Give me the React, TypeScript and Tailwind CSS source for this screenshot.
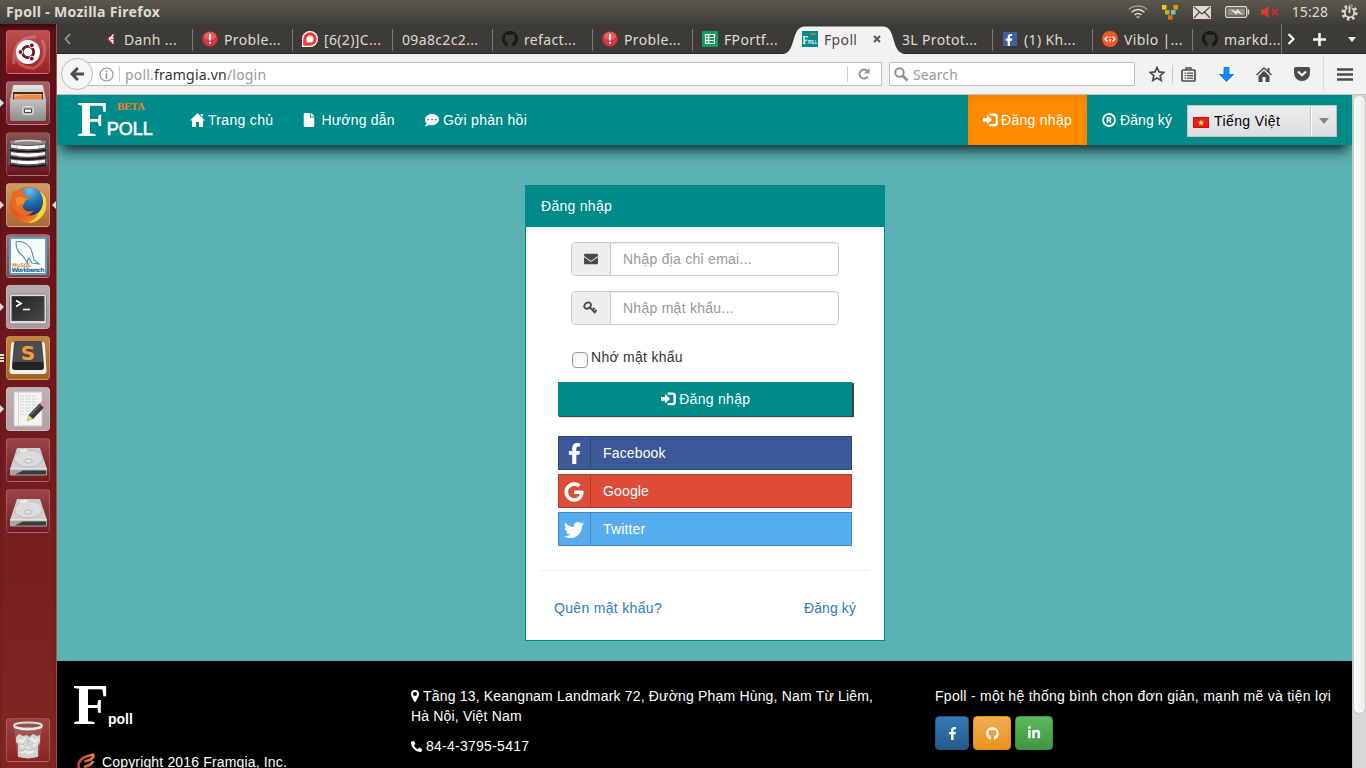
import React from "react";
import {
  FaCommentDots,
  FaEnvelope,
  FaFacebookF,
  FaFile,
  FaGithub,
  FaGoogle,
  FaLinkedinIn,
  FaPhoneAlt,
  FaTwitter,
} from "react-icons/fa";

const UI = "font-['Noto_Sans',sans-serif]";

/* ---------- small glyphs ---------- */

function LoginGlyph() {
  return (
    <svg width="15" height="14" viewBox="0 0 15 14" className="shrink-0">
      <path d="M0 5h4V2l5.200 4.800L4 11.500V8.800H0z" fill="#fff" />
      <path d="M6.500 1.600h5a2.200 2.200 0 0 1 2.200 2v6.500a2.200 2.200 0 0 1-2.200 2h-5" fill="none" stroke="#fff" strokeWidth="2.400" />
    </svg>
  );
}

function HomeGlyph() {
  return (
    <svg width="15" height="14" viewBox="0 0 15 14" className="shrink-0">
      <path d="M7.500 0 15 7.600h-2V14H9V9H6v5H2V7.600H0zM10.700 1h2v3l-2-2z" fill="#fff" />
    </svg>
  );
}

function RegisteredGlyph() {
  return (
    <svg width="14" height="14" viewBox="0 0 14 14" className="shrink-0">
      <circle cx="7" cy="7" r="6" fill="none" stroke="#fff" strokeWidth="1.800" />
      <path d="M5.400 9.700V4.700h2a1.300 1.300 0 0 1 0 2.600H5.400M7.300 7.300l1.600 2.400" fill="none" stroke="#fff" strokeWidth="1.500" />
    </svg>
  );
}

function KeyGlyph() {
  return (
    <svg width="15" height="14" viewBox="0 0 15 14">
      <g fill="none" stroke="#4a4a4a">
        <ellipse cx="4.600" cy="4.600" rx="3.600" ry="2.800" strokeWidth="1.900" transform="rotate(-35 4.600 4.600)" />
        <path d="m6.800 6.400 5.700 5.800M9.400 9l2.200-2M11.400 11l2.200-2" strokeWidth="1.900" />
      </g>
    </svg>
  );
}

function PinGlyph() {
  return (
    <svg width="8" height="12" viewBox="0 0 8 12" className="mr-1 inline align-[-1px]">
      <path fillRule="evenodd" d="M4 0a4 4 0 0 1 4 4c0 1.500-.5 2.200-3 7.300q-1 1.400-2 0C.5 6.200 0 5.500 0 4a4 4 0 0 1 4-4zm0 2a2 2 0 1 0 0 4 2 2 0 0 0 0-4z" fill="#fff" />
    </svg>
  );
}

function Octocat() {
  return (
    <svg width="16" height="16" viewBox="0 0 16 16">
      <path
        d="M5.600 15.600A8 8 0 1 1 10.400 15.600v-2.700c0-.7-.2-1.200-.5-1.500 2.100-.3 3.300-1.500 3.300-4 0-.9-.3-1.700-.8-2.300.1-.5.100-1.200-.2-2-.8 0-1.600.5-2.100.9a8 8 0 0 0-4.100 0c-.6-.4-1.400-.9-2.200-.9-.3.800-.3 1.500-.2 2-.5.600-.8 1.400-.8 2.300 0 2.500 1.200 3.700 3.300 4-.3.300-.4.600-.5 1.300-1 .3-1.900 0-2.500-1-.3-.5-.7-.8-1.200-.8.900.6 1 1.300 1.400 1.900.5.700 1.300.8 2.300.6z"
        fill="#181818"
      />
    </svg>
  );
}

/* ---------- desktop top panel ---------- */

function TopPanel() {
  return (
    <header className={`${UI} flex h-6 shrink-0 items-center justify-between bg-gradient-to-b from-[#5b594e] to-[#3f3e39] pr-2 pl-1.5`}>
      <span className="text-sm font-bold tracking-[0.32px] text-[#dfdbd2]">Fpoll - Mozilla Firefox</span>
      <div className="flex items-center">
        <svg width="20" height="14" viewBox="0 0 20 14" fill="none" stroke="#dfdbd2" strokeWidth="1.500">
          <path d="M.8 4.500C6-.2 14-.2 19.200 4.500" opacity=".55" />
          <path d="M3.500 7.200c4-3.400 9-3.400 13 0M6.500 9.900c2.200-1.800 4.800-1.800 7 0" />
          <path d="m8 11.500 2 2 2-2z" fill="#dfdbd2" stroke="none" />
        </svg>
        <svg width="16" height="15" viewBox="0 0 16 15" className="ml-[14px]">
          <path d="M0 0h4.500v4.500H0z" fill="#f7c51e" />
          <path d="M11.500 0H16v4.500h-4.500z" fill="#d4a500" />
          <path d="M3 5h4.500v4.500H3z" fill="#a4c400" />
          <path d="M9 5h4.500v4.500H9z" fill="#79bfe0" />
          <path d="M6 10.200h4.500v4.500H6z" fill="#f56b09" />
        </svg>
        <svg width="18" height="13" viewBox="0 0 18 13" className="ml-[15px]">
          <path d="M0 0h18v13H0z" fill="#dfdbd2" />
          <path d="m1 1 8 7 8-7M1 12l5.500-6M17 12l-5.500-6" fill="none" stroke="#4b4a43" strokeWidth="1.200" />
        </svg>
        <svg width="25" height="12" viewBox="0 0 25 12" className="ml-[14px]">
          <rect x=".7" y=".7" width="21" height="10.600" rx="1.500" fill="none" stroke="#dfdbd2" strokeWidth="1.300" />
          <path d="M2.500 2.500h17.500v7H2.500z" fill="#8f8d85" />
          <path d="M22.800 3.500h1.400v5h-1.400z" fill="#dfdbd2" />
          <path d="m5 3 6.500 2.500L12 3l6 5.800-6-2.300-.5 2.300z" fill="#efece4" />
        </svg>
        <svg width="18" height="14" viewBox="0 0 18 14" className="ml-[11px]">
          <path d="M0 4.500h3L7.500 1v12L3 9.500H0z" fill="#df382c" />
          <path d="m11 4.500 6 5.500M17 4.500 11 10" stroke="#c4302a" strokeWidth="2" />
        </svg>
        <span className="ml-[13px] text-sm tracking-[0.1px] text-[#dfdbd2]">15:28</span>
        <svg width="17" height="17" viewBox="0 0 17 17" className="ml-[13px]">
          <circle cx="8.500" cy="8.500" r="6.800" fill="none" stroke="#dfdbd2" strokeWidth="2.600" strokeDasharray="2.670 2.670" />
          <circle cx="8.500" cy="8.500" r="4.800" fill="none" stroke="#dfdbd2" strokeWidth="1.800" />
          <path d="M8.500 1v8" stroke="#45443e" strokeWidth="4" />
          <path d="M8.500 1.500V9" stroke="#dfdbd2" strokeWidth="1.900" />
        </svg>
      </div>
    </header>
  );
}

/* ---------- launcher ---------- */

function UbuntuArt() {
  return (
    <>
      <path d="M8 34C6 16 16 6 30 7M36 10c6 12 2 24-10 29M12 14C6 26 12 38 26 38" fill="none" stroke="#fff" strokeOpacity=".22" strokeWidth="3" />
      <circle cx="22" cy="22" r="12" fill="#fff" />
      <circle cx="22" cy="22" r="5.700" fill="none" stroke="#6b1a20" strokeWidth="2.800" />
      <g fill="#6b1a20" stroke="#fff" strokeWidth="1">
        <circle cx="14.500" cy="22" r="2.400" />
        <circle cx="25.800" cy="15.400" r="2.400" />
        <circle cx="25.800" cy="28.600" r="2.400" />
      </g>
    </>
  );
}

function FilesArt() {
  return (
    <>
      <path d="M7 5q0-1 1-1h28q1 0 1 1l3 14v19q0 2-2 2H6q-2 0-2-2V19z" fill="url(#steelTop)" />
      <path d="M7 11h30v8H7z" fill="#4b2a1b" />
      <path d="M8 13h28v6H8z" fill="#f3b06e" />
      <path d="m8 16 10-2h18v5H8z" fill="#e8884a" />
      <path d="M6 18.500h32v20H6z" fill="url(#steel)" />
      <rect x="16.500" y="25.500" width="11" height="8" rx="2" fill="#b9b9b7" stroke="#dedede" />
      <path d="M18.500 28h7v3.500h-7z" fill="#f5f5f5" stroke="#444" />
    </>
  );
}

function DatabaseBand({ y }: { y: number }) {
  return (
    <g transform={`translate(0 ${y})`}>
      <path d="M2 0q20 4 40 0v6.500q-20 4-40 0z" fill="#555" />
      <path d="M5 1.500q17 3 34 0v3q-17 3-34 0z" fill="#ededed" />
      <path d="M12 2.400q10 1.500 20 0v3q-10 1.500-20 0z" fill="#fff" />
      <path d="M4 7q18 3.500 36 0" fill="none" stroke="#111" strokeWidth="1.500" />
    </g>
  );
}

function DatabaseArt() {
  return (
    <>
      <path d="M4 9q18-3 36 0v3q-18 3-36 0z" fill="#8a8a8a" />
      <path d="M9 9.500q13-2 26 0" fill="none" stroke="#ddd" strokeWidth="1.500" />
      <DatabaseBand y={11} />
      <DatabaseBand y={18.500} />
      <DatabaseBand y={26} />
    </>
  );
}

function FirefoxArt() {
  return (
    <>
      <circle cx="22" cy="22" r="18" fill="url(#fox)" />
      <path d="M34 8.500C40 13 41.500 20 39.500 27 36 36 29 40 22 40c8-4 12-9 12-16z" fill="#fbd23a" />
      <circle cx="23.500" cy="18.500" r="14" fill="url(#globe)" />
      <path d="M8 6.500 10 11c2-3 4-4 6-5 0 3 1 5 2.500 6.500 2 0 4 0 5 1 0 2-2 3-4 4-1 1-1 2-1 3-2 1-2 3-1 5 2 3 6 4 10 2-2 4-7 6-12 4C9 29 5 23 5 17c0-4 1-8 3-10.500z" fill="#ea6a1e" />
      <path d="M34 9c3 5 4 10 2 15-1 5-5 8-9 9 9-1 14-8 13-15 0-4-2-7-6-9z" fill="#fbd23a" />
      <path d="M11 14c3-1 6 0 7 2 2 0 3-1 4-1 0 1-1 2-3 3-1 1-1 2-1 3-3 0-5 1-6 3-2-3-3-7-1-10z" fill="#f08a3c" />
    </>
  );
}

function WorkbenchArt() {
  return (
    <>
      <rect x="4" y="4" width="36" height="36" rx="1" fill="#f7fbfd" stroke="#5b9fc4" strokeWidth="2" />
      <path d="M10 8c7-2 14 3 16 10l2 8 5 4-7-1-3-5c-2 2-2 4-1 6l-5-8C11 19 10 14 10 8z" fill="#fdfeff" stroke="#4a8fb0" strokeWidth="1.100" />
      <text x="6" y="32.500" fontSize="5" fontWeight="bold" fill="#e08a1e" fontFamily="DejaVu Sans">MySQL</text>
      <text x="5.500" y="38" textLength="33" fontSize="6" fontWeight="bold" fill="#20678f" fontFamily="DejaVu Sans">Workbench</text>
    </>
  );
}

function TerminalArt() {
  return (
    <>
      <rect x="3.500" y="9" width="37" height="30" rx="2" fill="#dedcd8" stroke="#8a8888" />
      <rect x="6" y="11.500" width="32" height="24" fill="url(#screen)" stroke="#444" />
      <path d="m10 15.500 5 3-5 3" fill="none" stroke="#fff" strokeWidth="1.800" />
      <path d="M17 24.500h7" stroke="#fff" strokeWidth="1.500" />
    </>
  );
}

function SublimeArt() {
  return (
    <>
      <path d="M5 9q0-3 3-3h28q3 0 3 3l1.500 26q0 3-3 3h-31q-3 0-3-3z" fill="#efefef" />
      <path d="M8 7q0-2 2-2h24q2 0 2 2l2 22H6z" fill="#4c4c4c" />
      <path d="m6 31 1-5h30l1 5q0 3-3 3H9q-3 0-3-3z" fill="#242424" />
      <text x="22" y="24" textAnchor="middle" fontSize="20" fontWeight="bold" fill="#f89a35" fontFamily="DejaVu Sans">S</text>
    </>
  );
}

function EditorArt() {
  return (
    <>
      <path d="M8 5h28v34H8z" fill="#f4f4f2" stroke="#c5c5c5" strokeWidth=".8" />
      <path d="M12.500 5v34" stroke="#f3c4c4" />
      <path d="M14 9h16M14 12h19M14 15h17M14 18h18M14 21h14M14 24h12M14 27h6" stroke="#cfd2d7" strokeWidth="1" strokeDasharray="4 1 6 1" />
      <path d="m21 34 1.500-6L34 16l4.500 4L27 32z" fill="#3c3c3c" />
      <path d="m21 34 1.500-6 4.500 4z" fill="#e5d77a" />
      <path d="m33.500 16.500 2-2q2-1 4 1t.5 4L38 21z" fill="#e08dc0" />
      <path d="m24 28.500 10-10" stroke="#8a8a8a" />
    </>
  );
}

function DriveArt() {
  return (
    <>
      <path d="M11 10h23l7 21v6H4v-6z" fill="#cfcfcf" />
      <path d="M4 31h37v5q0 1.500-1.500 1.500h-34Q4 37.500 4 36z" fill="#a5a5a5" />
      <path d="M17 32.500h23v4H9z" fill="#3b3b3b" />
      <path d="M4 31h37" stroke="#f4f4f4" />
      <ellipse cx="22.500" cy="20.500" rx="14" ry="8.500" fill="#dcdcdc" stroke="#bcbcbc" />
      <ellipse cx="22.500" cy="23" rx="3.500" ry="2" fill="#e8e8e8" stroke="#b5b5b5" />
      <path d="m14 13 7-1" stroke="#efefef" strokeWidth="2" />
    </>
  );
}

function TrashArt() {
  return (
    <>
      <path d="M8 10h28l-3 28q-11 4-22 0z" fill="#fff" fillOpacity=".14" />
      <path d="m10 19 3-3 4 2 4-1 2 2 4-3 4 2 3-1v7l-2 4v10q-10 4-20 0V26l-2-2z" fill="#d3d3d1" />
      <path d="m12 22 4 2 3-4M25 20l4 4 3-3M15 29l4-2 4 3M27 28l3-2M15 35l4-2 4 2 5-2" fill="none" stroke="#ececeb" strokeWidth="2.200" />
      <path d="m16 26 4 2 3-2M14 32l3 1 3-2M25 32l5-2M22 21v4" fill="none" stroke="#b9b9b7" />
      <path d="M12 38.500q10 3 20 0" fill="none" stroke="#d5d5d3" />
      <ellipse cx="22" cy="7.500" rx="14" ry="3" fill="#8d5250" stroke="#d8d8d6" strokeWidth="2" />
      <path d="M8 9q14 5 28 0" fill="none" stroke="#e8e8e8" strokeWidth="2" />
    </>
  );
}

type Item = { id: string; art: React.ReactNode; tile: string; left?: "one" | "three"; right?: boolean };

const launcher: Item[] = [
  { id: "dash", art: <UbuntuArt />, tile: "from-[#bd5050] to-[#a01c20]" },
  { id: "files", art: <FilesArt />, tile: "from-[#a86469] to-[#7f2a35]", left: "one" },
  { id: "db", art: <DatabaseArt />, tile: "from-[#8d5053] to-[#65161c]" },
  { id: "firefox", art: <FirefoxArt />, tile: "from-[#d29a62] to-[#a96a38]", left: "one", right: true },
  { id: "workbench", art: <WorkbenchArt />, tile: "from-[#a06c70] to-[#80424a]" },
  { id: "terminal", art: <TerminalArt />, tile: "from-[#b6acac] to-[#a89a9c]", left: "one" },
  { id: "sublime", art: <SublimeArt />, tile: "from-[#c4823d] to-[#a8641f]", left: "three" },
  { id: "editor", art: <EditorArt />, tile: "from-[#bfb0b2] to-[#b0a2a4]", left: "one" },
  { id: "drive1", art: <DriveArt />, tile: "from-[#9c4549] to-[#701b20]" },
  { id: "drive2", art: <DriveArt />, tile: "from-[#9c4549] to-[#701b20]" },
];

function Tile({ item }: { item: Item }) {
  return (
    <div className="relative flex h-11 w-14 shrink-0 justify-center">
      {item.left === "one" && (
        <svg width="4" height="8" viewBox="0 0 4 8" className="absolute top-[18px] left-0">
          <path d="m0 0 4 4-4 4z" fill="#ddd" />
        </svg>
      )}
      {item.left === "three" && (
        <svg width="4" height="8" viewBox="0 0 4 8" className="absolute top-[18px] left-0">
          <path d="M0 0h4v2H0zM0 3h4v2H0zM0 6h4v2H0z" fill="#ddd" />
        </svg>
      )}
      <div className={`h-11 w-11 rounded-[4px] border border-white/20 bg-gradient-to-b ${item.tile}`}>
        <svg width="44" height="44" viewBox="0 0 44 44" className="-m-px">
          {item.art}
        </svg>
      </div>
      {item.right && (
        <svg width="4" height="8" viewBox="0 0 4 8" className="absolute top-[18px] right-0">
          <path d="m4 0-4 4 4 4z" fill="#ddd" />
        </svg>
      )}
    </div>
  );
}

function Launcher() {
  return (
    <aside className="flex w-[57px] shrink-0 flex-col justify-between border-r border-[#a0504a] bg-gradient-to-b from-[#5c1118] via-[#70191c] to-[#802723] pt-1.5 pb-1.5 shadow-[inset_0_4px_4px_-2px_rgba(0,0,0,.5)]">
      <svg width="0" height="0" className="absolute">
        <defs>
          <linearGradient id="steelTop" x1="0" y1="0" x2="0" y2="1">
            <stop offset="0" stopColor="#e4e4e2" />
            <stop offset="1" stopColor="#8a8a88" />
          </linearGradient>
          <linearGradient id="steel" x1="0" y1="0" x2="0" y2="1">
            <stop offset="0" stopColor="#c2c2c0" />
            <stop offset="1" stopColor="#90908e" />
          </linearGradient>
          <linearGradient id="screen" x1="0" y1="0" x2="1" y2="1">
            <stop offset="0" stopColor="#222" />
            <stop offset="1" stopColor="#474947" />
          </linearGradient>
          <linearGradient id="fox" x1="0" y1="0" x2="1" y2="1">
            <stop offset="0" stopColor="#ea6a1c" />
            <stop offset=".5" stopColor="#e2561b" />
            <stop offset="1" stopColor="#f8a02c" />
          </linearGradient>
          <radialGradient id="globe" cx=".5" cy=".1" r=".9">
            <stop offset="0" stopColor="#6cc4ea" />
            <stop offset=".5" stopColor="#2170b4" />
            <stop offset="1" stopColor="#10386f" />
          </radialGradient>
        </defs>
      </svg>
      <div className="flex flex-col gap-[7px]">
        {launcher.map((i) => (
          <Tile key={i.id} item={i} />
        ))}
      </div>
      <Tile item={{ id: "trash", art: <TrashArt />, tile: "from-[#a0403c] to-[#8b2424]" }} />
    </aside>
  );
}

/* ---------- browser chrome ---------- */

const framgiaIcon = (
  <svg width="16" height="16" viewBox="0 0 16 16">
    <path d="M11.500 3 4 8l7.500 5z" fill="#d8261c" />
    <path d="M11.500 3.500 7.500 8l4 4.500M7 7h4.500M8 9.500h3.500" fill="none" stroke="#fff" strokeWidth="1.300" />
  </svg>
);
const alertIcon = (
  <svg width="16" height="16" viewBox="0 0 16 16">
    <circle cx="8" cy="8" r="7.600" fill="#d23a41" stroke="#b02530" strokeWidth=".8" />
    <ellipse cx="8" cy="5" rx="6" ry="4" fill="#ef7d6f" opacity=".6" />
    <path d="M7 3h2l-.3 6.500H7.300zM7.200 11h1.600v1.800H7.200z" fill="#fff" />
  </svg>
);
const chatIcon = (
  <svg width="16" height="16" viewBox="0 0 16 16">
    <path d="M0 16V8a8 8 0 1 1 8 8z" fill="#fff" />
    <path d="M1.200 14.800V8A6.800 6.800 0 1 1 8 14.800z" fill="#f03e3e" />
    <path d="M4.500 11.500V8A3.500 3.500 0 1 1 8 11.500z" fill="#fff" />
  </svg>
);
const sheetIcon = (
  <svg width="16" height="16" viewBox="0 0 16 16">
    <rect width="16" height="16" rx="1" fill="#129d58" />
    <path d="M3.500 3.500h9v9h-9zM3.500 6.500h9M3.500 9.500h9M6.500 3.500v9" fill="none" stroke="#fff" strokeWidth="1.200" />
  </svg>
);
const fbIcon = (
  <span className="ml-px flex h-[14px] w-[14px] items-end justify-end bg-[#4060a5] pr-0.5">
    <FaFacebookF size={12} color="#fff" />
  </span>
);
const vibloIcon = (
  <svg width="16" height="16" viewBox="0 0 16 16">
    <circle cx="8" cy="8" r="8" fill="#f05a28" />
    <path d="M5.500 5.500 3 8l2.500 2.500M10.500 5.500 13 8l-2.500 2.500M8 5.500V7M8 8v2.500" fill="none" stroke="#fff" strokeWidth="1.300" />
  </svg>
);
const fpollIcon = (
  <svg width="16" height="16" viewBox="0 0 16 16">
    <path d="M0 0h16v16H0z" fill="#008b8b" />
    <text x=".5" y="13" fontWeight="bold" fill="#fff" textLength="14.500" lengthAdjust="spacingAndGlyphs">
      <tspan fontSize="13" fontFamily="Liberation Serif">F</tspan>
      <tspan fontSize="5" fontFamily="Liberation Sans">POLL</tspan>
    </text>
    <path d="M8.500 3h5" stroke="#d98732" strokeWidth="1.800" opacity=".8" />
  </svg>
);

type TabInfo = { icon?: React.ReactNode; label: string; active?: boolean; rule?: boolean };
const tabs: TabInfo[] = [
  { icon: framgiaIcon, label: "Danh ...", rule: true },
  { icon: alertIcon, label: "Proble...", rule: true },
  { icon: chatIcon, label: "[6(2)]C...", rule: true },
  { label: "09a8c2c2...", rule: true },
  { icon: <Octocat />, label: "refact...", rule: true },
  { icon: alertIcon, label: "Proble...", rule: true },
  { icon: sheetIcon, label: "FPortf..." },
  { icon: fpollIcon, label: "Fpoll", active: true },
  { label: "3L Protot...", rule: true },
  { icon: fbIcon, label: "(1) Kh...", rule: true },
  { icon: vibloIcon, label: "Viblo |...", rule: true },
  { icon: <Octocat />, label: "markd..." },
];

function Tab({ tab }: { tab: TabInfo }) {
  return (
    <div className="relative flex h-[30px] w-[100px] shrink-0 items-center">
      {tab.active && (
        <svg width="124" height="28" viewBox="0 0 124 28" className="absolute top-0.5 left-[-11px]">
          <path d="M0 28C15 28 8 .5 23 .5h78C115 .5 108 28 124 28z" fill="#f3f2f1" />
        </svg>
      )}
      <div className="relative flex w-full items-center gap-1.5 pl-[9px]">
        {tab.icon && <span className="flex w-4 shrink-0">{tab.icon}</span>}
        <span className={`mt-px text-sm tracking-[0.35px] whitespace-nowrap ${tab.active ? "text-[#4c4c4c]" : "text-[#dfdbd2]"}`}>{tab.label}</span>
        {tab.active && (
          <svg width="8" height="8" viewBox="0 0 8 8" className="ml-[10px]">
            <path d="m1 1 6 6M7 1 1 7" stroke="#5c5b59" strokeWidth="2.200" />
          </svg>
        )}
      </div>
      {tab.rule && <div className="absolute top-[5px] right-0 h-[22px] w-px bg-[#7d7b75]" />}
    </div>
  );
}

function TabBar() {
  return (
    <div className={`${UI} flex h-[30px] shrink-0 bg-[#3c3b37] shadow-[inset_0_-1px_0_#282724]`}>
      <div className="flex w-9 shrink-0 items-center pl-[7px]">
        <svg width="7" height="12" viewBox="0 0 7 12">
          <path d="M6 1 1.500 6 6 11" fill="none" stroke="#9a9994" strokeWidth="1.800" />
        </svg>
      </div>
      <div className="flex w-[1188px] shrink-0 overflow-hidden">
        {tabs.map((t, i) => (
          <Tab key={i} tab={t} />
        ))}
      </div>
      <div className="flex flex-1 items-center border-l border-[#77756f] pl-[5px]">
        <svg width="8" height="12" viewBox="0 0 8 12">
          <path d="m1.500 1 5 5-5 5" fill="none" stroke="#f5f5f5" strokeWidth="2.200" />
        </svg>
        <svg width="13" height="13" viewBox="0 0 13 13" className="ml-[18px]">
          <path d="M6.500 0v13M0 6.500h13" stroke="#f5f5f5" strokeWidth="2.600" />
        </svg>
        <svg width="8" height="5" viewBox="0 0 8 5" className="ml-[22px]">
          <path d="M0 0h8L4 5z" fill="#f5f5f5" />
        </svg>
      </div>
    </div>
  );
}

function Toolbar() {
  return (
    <div className={`${UI} flex h-[41px] shrink-0 items-center border-b border-[#c3c1bd] bg-[#f3f2f1] pl-1`}>
      <div className="relative z-10 flex h-8 w-8 shrink-0 items-center justify-center rounded-full border border-[#bcbab6] bg-[#f7f6f5]">
        <svg width="15" height="14" viewBox="0 0 15 14">
          <path d="M7.800 1 2 7l5.800 6M2.500 7H14" fill="none" stroke="#4d4d4d" strokeWidth="3" />
        </svg>
      </div>
      <div className="-ml-[6px] flex h-6 w-[795px] shrink-0 items-center border border-[#c0beba] bg-white pl-[11px]">
        <svg width="15" height="15" viewBox="0 0 15 15" className="shrink-0">
          <circle cx="7.500" cy="7.500" r="6.500" fill="none" stroke="#8f8f8f" strokeWidth="1.100" />
          <path d="M7.500 3.500v1.800M7.500 6.500v5" stroke="#8f8f8f" strokeWidth="1.600" />
        </svg>
        <div className="ml-[5px] h-4 w-px bg-[#cfcfcf]" />
        <span className="mt-px ml-[5px] flex-1 text-sm tracking-[0.2px] text-[#999]">
          poll.<span className="text-[#333]">framgia.vn</span>/login
        </span>
        <div className="h-4 w-px bg-[#cfcfcf]" />
        <svg width="12" height="12" viewBox="0 0 12 12" className="mr-[11px] ml-[10px]">
          <path d="M9.800 8.500A4.500 4.500 0 1 1 9 2.700" fill="none" stroke="#8796a3" strokeWidth="2" />
          <path d="M11.500 0v5.500H6z" fill="#8796a3" />
        </svg>
      </div>
      <div className="ml-[7px] flex h-6 w-[246px] shrink-0 items-center rounded-[2px] border border-[#c0beba] bg-white pl-1">
        <svg width="15" height="15" viewBox="0 0 15 15">
          <circle cx="5.500" cy="5.500" r="4.200" fill="none" stroke="#8f8f8f" strokeWidth="2" />
          <path d="m8.500 8.500 5 5" stroke="#8f8f8f" strokeWidth="2.600" />
        </svg>
        <span className="mt-px ml-1 text-sm tracking-[0.1px] text-[#999]">Search</span>
      </div>
      <div className="ml-[14px] flex flex-1 items-center">
        <svg width="16" height="16" viewBox="0 0 16 16">
          <path d="m8 1.500 2 4.400 4.800.5-3.600 3.200 1 4.800L8 12l-4.200 2.400 1-4.800L1.200 6.400 6 5.900z" fill="none" stroke="#4c4c4c" strokeWidth="1.700" />
        </svg>
        <div className="ml-[7px] h-[18px] w-px bg-[#c9c8c6]" />
        <svg width="15" height="15" viewBox="0 0 15 15" className="ml-2">
          <rect x="1" y="3" width="13" height="11" rx="1" fill="none" stroke="#4c4c4c" strokeWidth="1.700" />
          <path d="M5 3V1h5v2M3.500 6.200h1.500M6 6.200h6M3.500 8.700H5M6 8.700h6M3.500 11.200H5M6 11.200h6" fill="none" stroke="#4c4c4c" strokeWidth="1.300" />
        </svg>
        <svg width="15" height="15" viewBox="0 0 15 15" className="ml-[23px]">
          <path d="M5 .5h5v7h4.500l-7 7-7-7H5z" fill="#0e8bff" stroke="#0b6fd3" strokeWidth=".8" />
        </svg>
        <svg width="16" height="15" viewBox="0 0 16 15" className="ml-[22px]">
          <path d="M8 0 0 7.500 1 8.500 8 2l7 6.500 1-1-2.500-2.400V1h-2v2.200z" fill="#4c4c4c" />
          <path d="M8 3.800 2.500 9v6H6.500v-5h3v5h4V9z" fill="#4c4c4c" />
        </svg>
        <svg width="16" height="14" viewBox="0 0 16 14" className="ml-[22px]">
          <path d="M1.500 0h13Q16 0 16 1.500V6A8 8 0 0 1 0 6V1.500Q0 0 1.500 0z" fill="#4c4c4c" />
          <path d="M4 4.500 8 8.300l4-3.800" fill="none" stroke="#f3f2f1" strokeWidth="2.200" />
        </svg>
        <div className="ml-[13px] h-9 w-px bg-[#dbdad8]" />
        <svg width="16" height="13" viewBox="0 0 16 13" className="ml-[13px]">
          <path d="M0 1.500h16M0 6.500h16M0 11.500h16" stroke="#4c4c4c" strokeWidth="2.600" />
        </svg>
      </div>
    </div>
  );
}

/* ---------- web page ---------- */

function NavBar() {
  return (
    <nav className="relative z-10 flex h-[50px] shrink-0 items-center bg-[#008b8b] text-white shadow-[0_9px_14px_-4px_rgba(0,0,0,.8)]">
      <div className="relative ml-[20px] flex h-full w-[98px] items-start">
        <span className="font-['Liberation_Serif',serif] text-[51px] leading-[49px] font-bold">F</span>
        <span className="mt-[24px] -ml-[1.5px] text-lg leading-5 whitespace-nowrap [-webkit-text-stroke:.6px_white]">POLL</span>
        <span className="absolute top-[5px] left-10 font-['Liberation_Serif',serif] text-[11px] leading-3 font-bold tracking-[-0.4px] text-[#f58220]">BETA</span>
      </div>
      <a className="ml-[15px] flex items-center gap-[3px]">
        <HomeGlyph />
        <span className="tracking-[0.32px]">Trang chủ</span>
      </a>
      <a className="ml-[30px] flex items-center gap-[6px]">
        <FaFile size={14} className="w-3" />
        <span className="tracking-[0.22px]">Hướng dẫn</span>
      </a>
      <a className="ml-[30px] flex items-center gap-[4px]">
        <FaCommentDots size={14} />
        <span className="tracking-[0.28px]">Gởi phản hồi</span>
      </a>
      <div className="flex-1" />
      <a className="flex h-full w-[119px] items-center gap-[3px] bg-[#ff8c00] pl-[15px] shadow-[inset_0_3px_9px_rgba(0,0,0,.075)]">
        <LoginGlyph />
        <span className="tracking-[0.28px]">Đăng nhập</span>
      </a>
      <a className="ml-[15px] flex items-center gap-1">
        <RegisteredGlyph />
        <span className="w-[52px] tracking-[0.1px] whitespace-nowrap">Đăng ký</span>
      </a>
      <div className="mt-0.5 mr-[15px] ml-[15px] flex h-8 w-[150px] border border-[#c3c3c3] bg-gradient-to-b from-[#ececee] to-[#dedee2] text-black">
        <div className="flex flex-1 items-center gap-[5px] border-r border-[#c3c3c3] pl-[5px]">
          <svg width="16" height="11" viewBox="0 0 16 11" className="mt-0.5">
            <path d="M0 0h16v11H0z" fill="#f01c1c" />
            <path d="M.5.5h15v10H.5z" fill="none" stroke="#c00" strokeOpacity=".6" />
            <path d="m8 2.500.9 2.200 2.300.1-1.800 1.500.6 2.200L8 7.200 6 8.500l.6-2.200-1.800-1.500 2.300-.1z" fill="#ff3" />
          </svg>
          <span className="tracking-[0.4px]">Tiếng Việt</span>
        </div>
        <div className="flex w-[25px] items-center justify-center border-l border-white">
          <svg width="10" height="6" viewBox="0 0 10 6">
            <path d="M0 0h10L5 6z" fill="#868686" />
          </svg>
        </div>
      </div>
    </nav>
  );
}

function Field({ icon, placeholder }: { icon: React.ReactNode; placeholder: string }) {
  return (
    <div className="mx-[45px] flex h-[34px] overflow-hidden rounded-[4px] border border-[#ccc]">
      <div className="flex w-[39px] items-center justify-center border-r border-[#ccc] bg-[#eee] text-[#4a4a4a]">{icon}</div>
      <div className="flex flex-1 items-center pl-[12.5px] tracking-[0.26px] text-[#999] shadow-[inset_0_1px_1px_rgba(0,0,0,.075)]">{placeholder}</div>
    </div>
  );
}

function Social({ icon, label, tone }: { icon: React.ReactNode; label: string; tone: string }) {
  return (
    <div className={`flex h-[34px] border border-black/20 text-white ${tone}`}>
      <div className="flex w-8 items-center justify-center border-r border-black/20">{icon}</div>
      <span className="ml-[12.5px] self-center tracking-[0.15px]">{label}</span>
    </div>
  );
}

function LoginPanel() {
  return (
    <section className="mt-10 flex h-[456px] w-[360px] flex-col border border-[#008b8b] bg-white">
      <h1 className="flex h-[41px] shrink-0 items-center bg-[#008b8b] pb-px pl-[15.5px] tracking-[0.28px] text-white">Đăng nhập</h1>
      <div className="mt-[15px] flex flex-col gap-[15px]">
        <Field icon={<FaEnvelope size={14} />} placeholder="Nhập địa chỉ emai..." />
        <Field icon={<KeyGlyph />} placeholder="Nhập mật khẩu..." />
      </div>
      <label className="mt-[22px] ml-[46px] flex h-5 items-center gap-[3.5px] tracking-[0.28px] text-[#333]">
        <span className="mt-[5px] h-4 w-4 rounded-[4px] border border-[#9d9d9d] bg-gradient-to-b from-[#f3f3f3] to-white" />
        Nhớ mật khẩu
      </label>
      <button className="mt-[15px] ml-8 flex h-[34px] w-[294px] shrink-0 items-center justify-center gap-[3px] bg-[#008b8b] pl-[2.5px] tracking-[0.28px] text-white shadow-[1px_1px_1px_#444,2px_1px_0_#444]">
        <LoginGlyph />
        Đăng nhập
      </button>
      <div className="mt-5 ml-8 flex w-[294px] flex-col gap-1">
        <Social icon={<FaFacebookF size={21} />} label="Facebook" tone="bg-[#3b5998]" />
        <Social icon={<FaGoogle size={20} className="mt-0.5" />} label="Google" tone="bg-[#dd4b39]" />
        <Social icon={<FaTwitter size={20} className="mt-0.5" />} label="Twitter" tone="bg-[#55acee]" />
      </div>
      <hr className="mx-[15px] mt-6 border-[#eee]" />
      <div className="mt-[27px] flex justify-between pr-[27.5px] pl-[28.5px] text-[#337ab7]">
        <a className="tracking-[0.32px]">Quên mật khẩu?</a>
        <a className="tracking-[0.1px]">Đăng ký</a>
      </div>
    </section>
  );
}

function Footer() {
  return (
    <footer className="flex h-[107px] shrink-0 overflow-hidden bg-black text-white">
      <div className="flex w-[354px] shrink-0 flex-col pl-4">
        <div className="flex h-[72px] items-baseline">
          <span className="w-[35px] origin-left scale-x-105 font-['Liberation_Serif',serif] text-[56px] leading-[88px] font-bold">F</span>
          <span className="font-bold">poll</span>
        </div>
        <div className="mt-[19px] ml-1 flex gap-[7px]">
          <svg width="18" height="20" viewBox="0 0 18 20" className="mt-px">
            <path d="M17 1.500C8 3 1.500 6 1.500 12c0 4 2 6 5 6M16.500 1.500c0 4-2 5-9 7M16 8c-1 3-3 4-9 6" fill="none" stroke="url(#flame)" strokeWidth="2.600" />
            <defs>
              <linearGradient id="flame" gradientUnits="userSpaceOnUse" x1="0" y1="0" x2="18" y2="0">
                <stop offset="0" stopColor="#c2334d" />
                <stop offset="1" stopColor="#f08a35" />
              </linearGradient>
            </defs>
          </svg>
          <span className="tracking-[0.16px]">Copyright 2016 Framgia, Inc.</span>
        </div>
      </div>
      <div className="w-[524px] shrink-0 pt-[25px]">
        <p className="tracking-[0.18px]">
          <PinGlyph />
          Tầng 13, Keangnam Landmark 72, Đường Phạm Hùng, Nam Từ Liêm,
          <br />
          Hà Nội, Việt Nam
        </p>
        <p className="mt-[10px] tracking-[0.26px]">
          <FaPhoneAlt size={11} className="mr-1 inline -scale-100 align-[-1px] [transform:none] scale-none" />
          84-4-3795-5417
        </p>
      </div>
      <div className="flex-1 pt-[25px]">
        <p className="tracking-[0.28px] whitespace-nowrap">Fpoll - một hệ thống bình chọn đơn giản, mạnh mẽ và tiện lợi</p>
        <div className="mt-[10px] flex gap-1">
          <span className="flex h-[34px] w-[34px] items-center justify-center rounded-[4px] border border-[#245580] bg-gradient-to-b from-[#337ab7] to-[#265a88]">
            <FaFacebookF size={13} />
          </span>
          <span className="flex h-[34px] w-[38px] items-center justify-center rounded-[4px] border border-[#e38d13] bg-gradient-to-b from-[#f0ad4e] to-[#eb9316]">
            <FaGithub size={13} />
          </span>
          <span className="flex h-[34px] w-[38px] items-center justify-center rounded-[4px] border border-[#3e8f3e] bg-gradient-to-b from-[#5cb85c] to-[#419641]">
            <FaLinkedinIn size={14} />
          </span>
        </div>
      </div>
    </footer>
  );
}

export default function App() {
  return (
    <div className="flex h-[768px] w-[1366px] flex-col overflow-hidden">
      <TopPanel />
      <div className="flex min-h-0 flex-1">
        <Launcher />
        <div className="flex min-w-0 flex-1 flex-col">
          <TabBar />
          <Toolbar />
          <div className="flex min-h-0 flex-1">
            <div className="flex w-[1295px] shrink-0 flex-col overflow-hidden bg-[#5ab2b2] font-['Liberation_Sans',sans-serif] text-sm leading-5">
              <NavBar />
              <main className="flex flex-1 justify-center">
                <LoginPanel />
              </main>
              <Footer />
            </div>
            <div className="flex-1 border-l border-[#c8c7c5] bg-[#d9d8d7]">
              <div className="h-[619px] rounded-full border border-[#c8c6c3] bg-gradient-to-r from-white to-[#ecebea]" />
            </div>
          </div>
        </div>
      </div>
    </div>
  );
}
